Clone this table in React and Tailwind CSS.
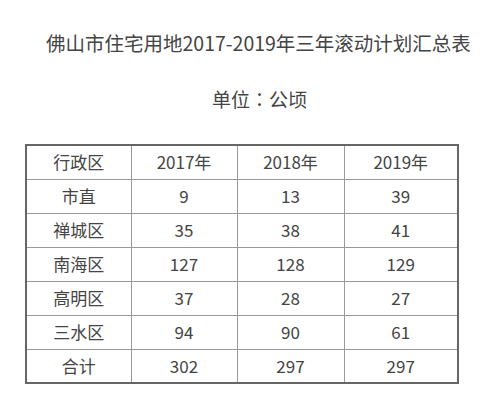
import React from 'react';

const rows = [
  ['行政区', '2017年', '2018年', '2019年'],
  ['市直', '9', '13', '39'],
  ['禅城区', '35', '38', '41'],
  ['南海区', '127', '128', '129'],
  ['高明区', '37', '28', '27'],
  ['三水区', '94', '90', '61'],
  ['合计', '302', '297', '297'],
];

const colWidths = ['w-[105px]', 'w-[106px]', 'w-[107px]', 'w-[114px]'];

export default function App() {
  return (
    <div className="w-[500px] h-[410px] bg-white text-[#444] font-['Noto_Sans_CJK_SC','Noto_Sans',sans-serif]">
      <h1 className="pt-[28px] pl-[46px] text-[19.5px] leading-[30px] font-normal whitespace-nowrap">
        佛山市住宅用地2017-2019年三年滚动计划汇总表
      </h1>
      <p className="mt-[26px] pl-[212px] text-[19px] leading-[30px]">
        单位<span className="font-['Noto_Sans_CJK_TC',sans-serif]">：</span>公顷
      </p>
      <table className="ml-[25px] mt-[30px] border-collapse border-2 border-[#666] text-[17px]">
        <tbody>
          {rows.map((row, i) => (
            <tr key={i} className="h-[34px]">
              {row.map((cell, j) => (
                <td
                  key={j}
                  className={`${colWidths[j]} border border-[#999] text-center leading-[32px] p-0`}
                >
                  {cell}
                </td>
              ))}
            </tr>
          ))}
        </tbody>
      </table>
    </div>
  );
}
